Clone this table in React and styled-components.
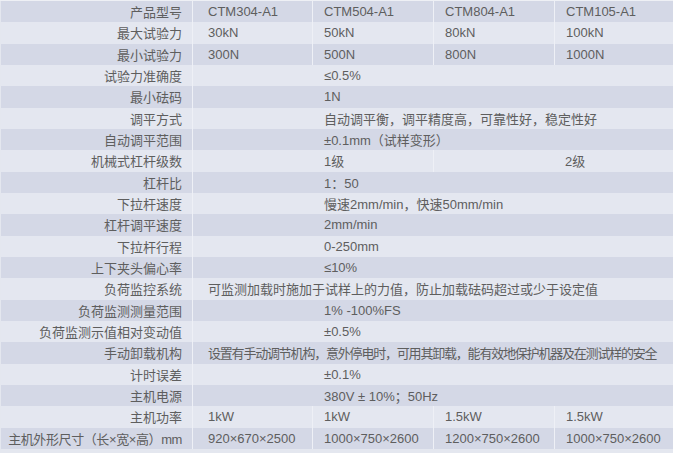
import React from 'react';
import styled, { createGlobalStyle } from 'styled-components';

const GlobalStyle = createGlobalStyle`
  html, body {
    margin: 0;
    padding: 0;
    background: #e4e7ef;
  }
  body {
    font-family: "Liberation Sans", "Noto Sans CJK SC", sans-serif;
  }
`;

const Table = styled.div`
  width: 673px;
  height: 449px;
  display: flex;
  flex-direction: column;
  border-top: 1px solid #eef0f5;
  box-sizing: border-box;
  padding-left: 1px;
`;

const Row = styled.div`
  flex: 1;
  display: grid;
  grid-template-columns: 191px 120px 121px 121px 1fr;
  background: ${p => (p.$alt ? '#e4e7f0' : '#d4d8e6')};
  font-size: 13px;
  color: #5e5e5e;
`;

const Label = styled.div`
  display: flex;
  align-items: center;
  justify-content: flex-end;
  padding-right: 10px;
  white-space: nowrap;
  letter-spacing: ${p => (p.$tight ? '-0.4px' : '0')};
`;

const Cell = styled.div`
  grid-column: span ${p => p.$span || 1};
  display: flex;
  align-items: center;
  padding-left: ${p => p.$pad ?? 11}px;
  border-left: 1px solid #eef0f6;
  white-space: nowrap;
  letter-spacing: ${p => (p.$tight ? '-1.2px' : '0')};
`;

const rows = [
  { label: '产品型号', cols: ['CTM304-A1', 'CTM504-A1', 'CTM804-A1', 'CTM105-A1'] },
  { label: '最大试验力', cols: ['30kN', '50kN', '80kN', '100kN'] },
  { label: '最小试验力', cols: ['300N', '500N', '800N', '1000N'] },
  { label: '试验力准确度', all: '≤0.5%' },
  { label: '最小砝码', all: '1N' },
  { label: '调平方式', all: '自动调平衡，调平精度高，可靠性好，稳定性好' },
  { label: '自动调平范围', all: '±0.1mm（试样变形）' },
  { label: '机械式杠杆级数', halves: ['1级', '2级'] },
  { label: '杠杆比', all: '1：50' },
  { label: '下拉杆速度', all: '慢速2mm/min，快速50mm/min' },
  { label: '杠杆调平速度', all: '2mm/min' },
  { label: '下拉杆行程', all: '0-250mm' },
  { label: '上下夹头偏心率', all: '≤10%' },
  { label: '负荷监控系统', wide: '可监测加载时施加于试样上的力值，防止加载砝码超过或少于设定值' },
  { label: '负荷监测测量范围', all: '1% -100%FS' },
  { label: '负荷监测示值相对变动值', all: '±0.5%' },
  { label: '手动卸载机构', wide: '设置有手动调节机构，意外停电时，可用其卸载，能有效地保护机器及在测试样的安全', tight: true },
  { label: '计时误差', all: '±0.1%' },
  { label: '主机电源', all: '380V ± 10%；50Hz' },
  { label: '主机功率', cols: ['1kW', '1kW', '1.5kW', '1.5kW'] },
  { label: '主机外形尺寸（长×宽×高）mm', tightLabel: true, cols: ['920×670×2500', '1000×750×2600', '1200×750×2600', '1000×750×2600'] },
];

function SpecRow({ row, alt }) {
  return (
    <Row $alt={alt}>
      <Label $tight={row.tightLabel}>{row.label}</Label>
      {row.cols && row.cols.map((c, i) => (
        <Cell key={i} $pad={i === 0 ? 15 : 11}>{c}</Cell>
      ))}
      {row.all && <Cell $span={4} $pad={131}>{row.all}</Cell>}
      {row.wide && <Cell $span={4} $pad={15} $tight={row.tight}>{row.wide}</Cell>}
      {row.halves && (
        <>
          <Cell $span={2} $pad={131}>{row.halves[0]}</Cell>
          <Cell $span={2} $pad={131}>{row.halves[1]}</Cell>
        </>
      )}
    </Row>
  );
}

function App() {
  return (
    <>
      <GlobalStyle />
      <Table>
        {rows.map((r, i) => (
          <SpecRow key={i} row={r} alt={i % 2 === 1} />
        ))}
      </Table>
    </>
  );
}

export default App;
